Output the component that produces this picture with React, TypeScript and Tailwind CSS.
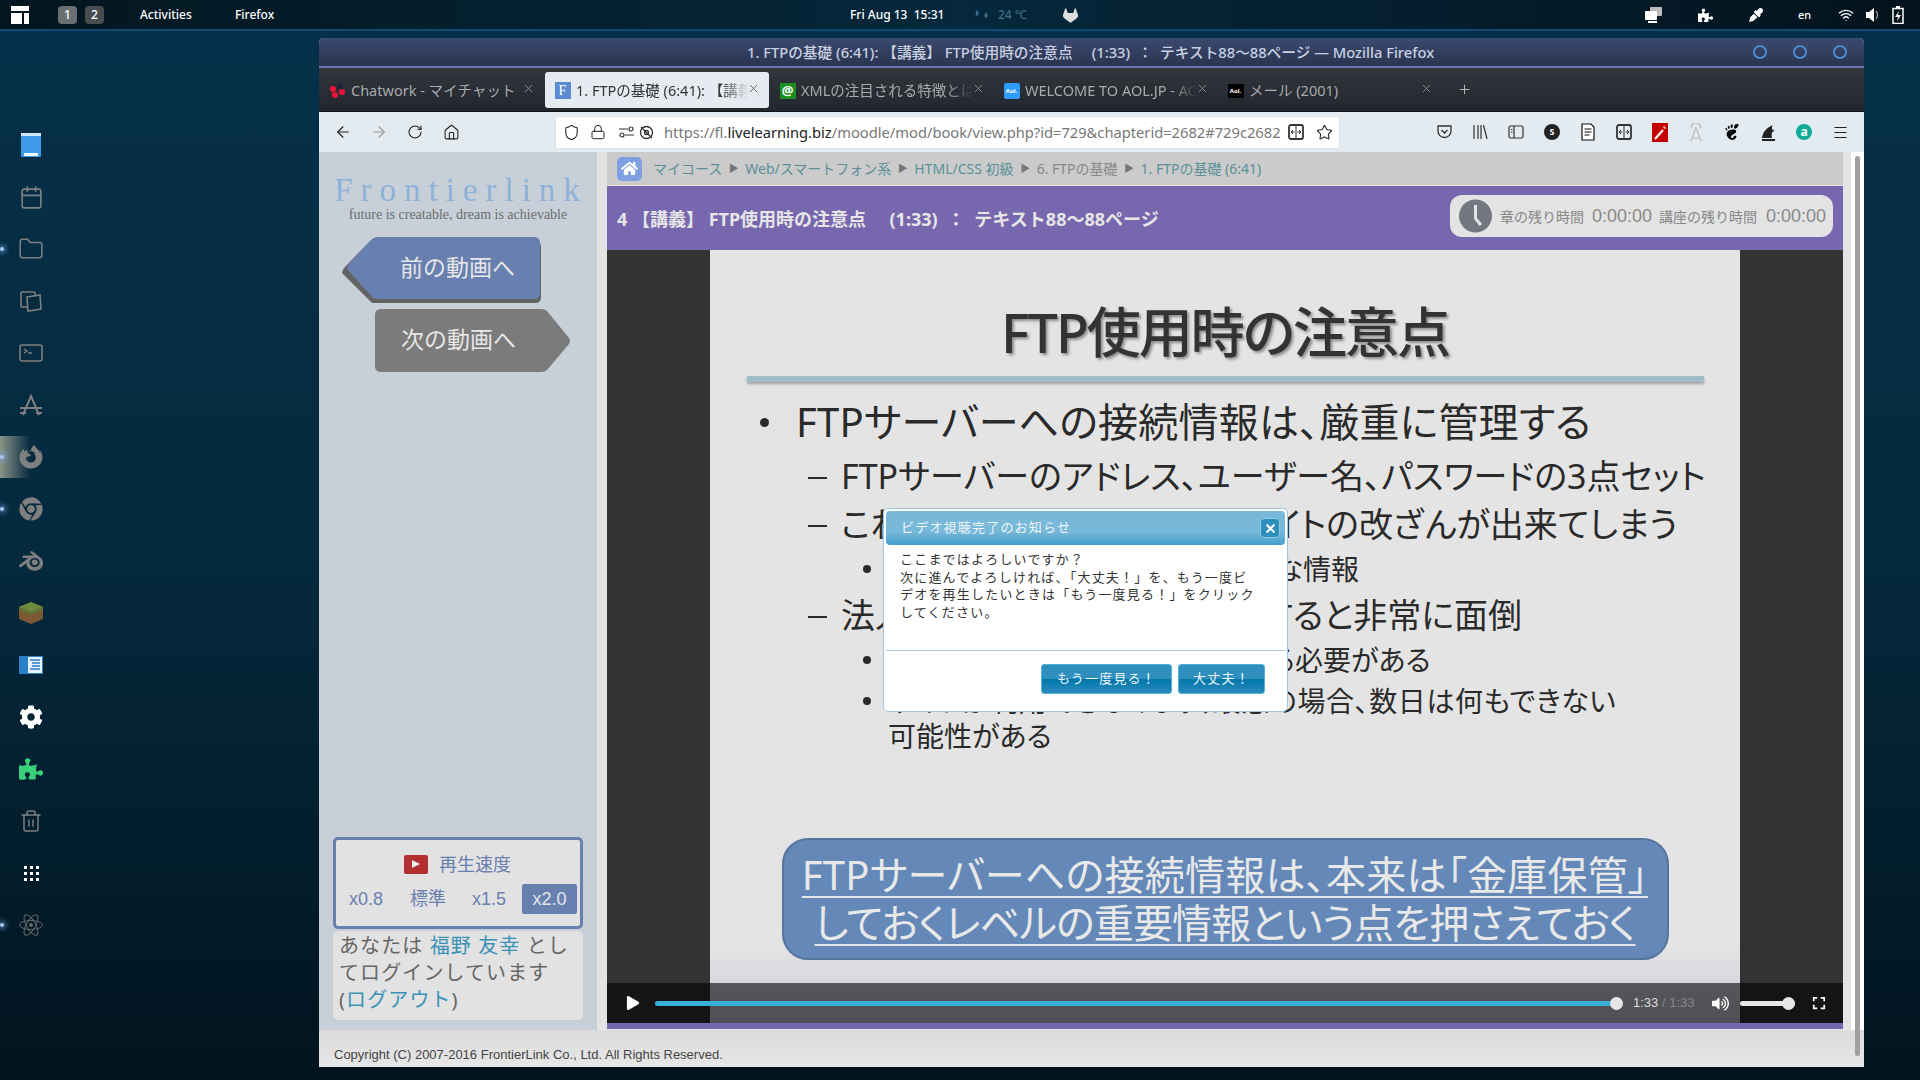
import { ArrowLeft, ArrowRight, Calendar, Folder, Home, Lock, Menu, Plus, RotateCw, Shield, Star, Trash2, Wifi, X } from "lucide-react";
import { FaChrome, FaCog, FaExpand, FaFirefoxBrowser, FaHome, FaPlay, FaPuzzlePiece, FaVolumeUp, FaEyeDropper } from "react-icons/fa";
import { SiBlender, SiGitlab, SiGnome } from "react-icons/si";

const cjk = "[font-family:'Noto_Sans','Noto_Sans_CJK_JP',sans-serif]";

function Dock() {
  const grey = "text-[#7f7f7f]";
  return (
    <div className="w-[319px] shrink-0 pt-[88px] flex flex-col">
      <DockItem>
        <svg width="20" height="24" viewBox="0 0 20 24">
          <rect width="20" height="24" rx="1" fill="#3f9be8" />
          <rect width="20" height="3" fill="#cfe6f7" />
          <rect x="3" y="20" width="14" height="3" fill="#f2f8fc" />
        </svg>
      </DockItem>
      <DockItem><Calendar size={25} strokeWidth={1.6} className={grey} /></DockItem>
      <DockItem dot><Folder size={26} strokeWidth={1.4} className={grey} /></DockItem>
      <DockItem>
        <svg width="24" height="24" viewBox="0 0 24 24" fill="none" stroke="#7f7f7f" strokeWidth="1.6">
          <rect x="2" y="3" width="14" height="15" rx="1" />
          <path d="M8 8l13-2 1 14-13 2z" fill="#05293d" />
        </svg>
      </DockItem>
      <DockItem>
        <svg width="24" height="18" viewBox="0 0 24 18" fill="none" stroke="#7f7f7f" strokeWidth="1.5">
          <rect x="1" y="1" width="22" height="16" rx="2" />
          <path d="M5 5l3 2-3 2M9 9h4" />
        </svg>
      </DockItem>
      <DockItem>
        <svg width="24" height="22" viewBox="0 0 24 22" fill="none" stroke="#7f7f7f" strokeWidth="2">
          <path d="M4 21L12 2l8 19M1 14h22M1 19h6M17 19h6" />
        </svg>
      </DockItem>
      <DockItem active dot><FaFirefoxBrowser size={24} className={grey} /></DockItem>
      <DockItem dot><FaChrome size={24} className={grey} /></DockItem>
      <DockItem><SiBlender size={24} className={grey} /></DockItem>
      <DockItem>
        <svg width="24" height="22" viewBox="0 0 24 22">
          <path d="M12 0l12 5v12l-12 5-12-5V5z" fill="#7c5836" />
          <path d="M12 0l12 5-12 5L0 5z" fill="#6b8a3c" />
          <path d="M0 5l12 5 12-5v3l-12 5L0 8z" fill="#5d7434" />
        </svg>
      </DockItem>
      <DockItem>
        <svg width="24" height="18" viewBox="0 0 24 18">
          <rect width="24" height="18" fill="#2a80c8" />
          <rect x="9" y="1" width="14" height="16" fill="#e8f2fa" />
          <path d="M11 4h10M13 7h8M13 10h8M11 13h10" stroke="#2a80c8" strokeWidth="1.4" />
        </svg>
      </DockItem>
      <DockItem><FaCog size={24} className="text-white" /></DockItem>
      <DockItem><FaPuzzlePiece size={24} className="text-[#3ad07a]" /></DockItem>
      <DockItem><Trash2 size={24} strokeWidth={1.5} className={grey} /></DockItem>
      <DockItem>
        <div className="grid grid-cols-3 gap-[3px]">
          {Array.from({ length: 9 }).map((_, i) => (
            <div key={i} className="w-[3px] h-[3px] bg-white" />
          ))}
        </div>
      </DockItem>
      <DockItem dot>
        <svg width="24" height="24" viewBox="0 0 24 24" fill="none" stroke="#666" strokeWidth="1">
          <ellipse cx="12" cy="12" rx="11.500" ry="4.500" />
          <ellipse cx="12" cy="12" rx="11.500" ry="4.500" transform="rotate(60 12 12)" />
          <ellipse cx="12" cy="12" rx="11.500" ry="4.500" transform="rotate(120 12 12)" />
          <circle cx="12" cy="12" r="1.500" fill="#666" />
        </svg>
      </DockItem>
    </div>
  );
}

function DockItem({ children, dot, active }: { children: React.ReactNode; dot?: boolean; active?: boolean }) {
  return (
    <div className="relative h-[52px] w-[62px] flex items-center justify-center">
      {active && <div className="absolute left-0 top-[5px] h-[42px] w-[30px] bg-gradient-to-r from-[#8b9488] to-transparent" />}
      {dot && <div className="absolute left-0 top-[24px] h-[4px] w-[4px] rounded-full bg-[#a8c8f0] shadow-[0_0_5px_2px_rgba(120,170,240,0.6)]" />}
      <div className="relative">{children}</div>
    </div>
  );
}

function TopBar() {
  return (
    <div className="h-[31px] shrink-0 pt-[1px] flex items-center border-b-2 border-[#0e4a72] bg-gradient-to-r from-[#03161f] via-[#05283c] to-[#03131d] text-white text-[12px] font-medium [font-family:'Noto_Sans',sans-serif]">
      <svg className="ml-[11px]" width="18" height="18" viewBox="0 0 18 18" fill="#fff">
        <rect width="18" height="5" />
        <rect y="7" width="11" height="11" />
        <rect x="13" y="7" width="5" height="11" />
      </svg>
      <div className="ml-[29px] w-[19px] h-[18px] rounded-[4px] bg-[#6b6f72] flex items-center justify-center">1</div>
      <div className="ml-[8px] w-[19px] h-[18px] rounded-[4px] bg-[#4a4d50] flex items-center justify-center">2</div>
      <div className="ml-[36px] w-[95px]">Activities</div>
      <div className="w-[615px]">Firefox</div>
      <div className="w-[124px] whitespace-pre">Fri Aug 13  15:31</div>
      <svg width="16" height="12" viewBox="0 0 16 12" fill="#3f6f8f"><path d="M3 1c2 3 2 5 0 6-2-1-2-3 0-6zM12 3c2 3 2 5 0 6-2-1-2-3 0-6z" /></svg>
      <div className="ml-[8px] w-[65px] text-[#3f6a88]">24 ℃</div>
      <SiGitlab size={15} className="text-[#ddd]" />
      <div className="ml-auto mr-[16px] flex items-center">
        <svg width="17" height="16" viewBox="0 0 17 16" fill="#fff"><rect x="5" width="12" height="9" rx="1" fill="#bbb" /><rect y="4" width="12" height="9" rx="1" /><rect x="3" y="14" width="9" height="2" /></svg>
        <FaPuzzlePiece size={15} className="ml-[36px]" />
        <FaEyeDropper size={14} className="ml-[36px]" />
        <span className="ml-[29px] w-[25px] text-center text-[11px]">en</span>
        <Wifi size={16} className="ml-[21px]" />
        <svg className="ml-[12px]" width="15" height="14" viewBox="0 0 15 14" fill="#fff"><path d="M0 4h3l5-4v14l-5-4H0z" /><path d="M10 3c2 2 2 6 0 8" fill="none" stroke="#aaa" strokeWidth="1.2" /></svg>
        <svg className="ml-[11px]" width="12" height="18" viewBox="0 0 12 18" fill="none" stroke="#fff" strokeWidth="1.5"><rect x="1" y="2.5" width="10" height="15" /><rect x="4" y="0" width="4" height="2" fill="#fff" stroke="none" /><path d="M7 5L3 11h3l-1 4 4-6H6z" fill="#fff" stroke="none" /></svg>
      </div>
    </div>
  );
}

function Tab({ icon, label, active, fade }: { icon: React.ReactNode; label: string; active?: boolean; fade?: boolean }) {
  return (
    <div className={"relative w-[224px] h-[36px] shrink-0 flex items-center pl-[9px] pt-[2px] rounded-[3px] text-[14.5px] " + (active ? "bg-[#e5ebf1] text-[#333]" : "text-[#a8aaad]")}>
      <div className="w-[17px] h-[17px] shrink-0 mr-[5px] flex items-center justify-center">{icon}</div>
      <div className={"w-[172px] whitespace-nowrap overflow-hidden " + (fade ? "[mask-image:linear-gradient(to_right,black_85%,transparent)]" : "")}>{label}</div>
      <X size={13} strokeWidth={1.4} className={"absolute right-[9px] top-[10px] " + (active ? "text-[#444]" : "text-[#a8aaad]")} />
    </div>
  );
}

function ToolIcon({ children }: { children: React.ReactNode }) {
  return <div className="w-[36px] flex items-center justify-center">{children}</div>;
}

function ReaderIcon() {
  return (
    <svg width="16" height="16" viewBox="0 0 16 16" fill="none" stroke="#333" strokeWidth="1.8">
      <rect x="1" y="1" width="14" height="14" rx="2" />
      <path d="M8 2v12" strokeWidth="1" />
      <path d="M3 8h3.500M5 6L3 8l2 2M13 8H9.500M11 6l2 2-2 2" strokeWidth="1" />
    </svg>
  );
}

function Toolbar() {
  return (
    <div className="h-[40px] shrink-0 bg-[#e3ebf0] flex items-center text-[#222]">
      <div className="w-[236px] pl-[6px] flex items-center">
        <ToolIcon><ArrowLeft size={18} strokeWidth={1.5} /></ToolIcon>
        <ToolIcon><ArrowRight size={18} strokeWidth={1.5} className="text-[#999]" /></ToolIcon>
        <ToolIcon><RotateCw size={16} strokeWidth={1.6} /></ToolIcon>
        <ToolIcon><Home size={17} strokeWidth={1.5} /></ToolIcon>
      </div>
      <div className="w-[785px] h-[33px] bg-white rounded-[3px] border border-[#dde3e8] flex items-center pl-[6px]">
        <div className="w-[18px] flex justify-center"><Shield size={17} strokeWidth={1.5} /></div>
        <div className="w-[28px] ml-[4px] flex justify-center"><Lock size={16} strokeWidth={1.5} /></div>
        <svg className="ml-[7px]" width="15" height="12" viewBox="0 0 15 12" fill="none" stroke="#333" strokeWidth="1.2"><circle cx="3" cy="9" r="2" /><circle cx="12" cy="3" r="2" /><path d="M0 3h9M6 9h9" /></svg>
        <svg className="ml-[5px]" width="15" height="15" viewBox="0 0 15 15" fill="none" stroke="#333" strokeWidth="1.3"><circle cx="7.5" cy="7.5" r="6" /><path d="M2 2l11 11" /><circle cx="7.5" cy="7.5" r="2" /></svg>
        <div className="ml-[10px] w-[622px] whitespace-nowrap overflow-hidden text-[14.7px] text-[#777]">
          https://fl.<span className="text-[#222]">livelearning.biz</span>/moodle/mod/book/view.php?id=729&amp;chapterid=2682#729c2682
        </div>
        <div className="ml-[2px]"><ReaderIcon /></div>
        <Star size={17} strokeWidth={1.5} className="ml-[12px]" />
      </div>
      <div className="ml-[86px] flex items-center">
        <ToolIcon><svg width="15" height="14" viewBox="0 0 15 14" fill="none" stroke="#333" strokeWidth="1.3"><path d="M1 1h13v5a6.500 6.500 0 0 1-13 0z" /><path d="M4.500 5l3 3 3-3" /></svg></ToolIcon>
        <ToolIcon><svg width="15" height="16" viewBox="0 0 15 16" fill="none" stroke="#333" strokeWidth="1.2"><path d="M1 1v14M5 1v14M8 1v14M10.500 1L14 15" /></svg></ToolIcon>
        <ToolIcon><svg width="16" height="14" viewBox="0 0 16 14" fill="none" stroke="#333" strokeWidth="1.2"><rect x="1" y="1" width="14" height="12" rx="1.500" /><path d="M6 1v12M3 4.500h1.500M3 7h1.500" /></svg></ToolIcon>
        <ToolIcon><div className="w-[16px] h-[16px] rounded-full bg-[#222] text-white text-[9px] font-bold flex items-center justify-center">S</div></ToolIcon>
        <ToolIcon><svg width="14" height="18" viewBox="0 0 14 18" fill="#fff" stroke="#111" strokeWidth="1.2"><path d="M1 1h9l3 3v13H1z" /><path d="M3.500 6h7M3.500 9h7M3.500 12h5" /></svg></ToolIcon>
        <ToolIcon><ReaderIcon /></ToolIcon>
        <ToolIcon><svg width="16" height="19" viewBox="0 0 16 19"><rect width="16" height="19" fill="#c40000" /><path d="M3 16L11 7" stroke="#fff" strokeWidth="2" /><path d="M12 3v2M14 5h-2" stroke="#fff" /></svg></ToolIcon>
        <ToolIcon><svg width="14" height="18" viewBox="0 0 14 18" fill="none" stroke="#bbb" strokeWidth="1.2"><path d="M2 5a5 5 0 0 1 10 0M7 5L3 15h8zM1 17h3M10 17h3" /></svg></ToolIcon>
        <ToolIcon><SiGnome size={16} className="text-black" /></ToolIcon>
        <ToolIcon><svg width="15" height="17" viewBox="0 0 15 17" fill="#222"><path d="M1 14c1-6 4-10 11-13-2 3-1 5 2 6-3 0-4 2-3 7z" /><rect x="1" y="15" width="13" height="2" /></svg></ToolIcon>
        <ToolIcon><div className="w-[16px] h-[16px] rounded-full bg-[#0cae9a] text-white text-[12px] font-bold flex items-center justify-center leading-none">a</div></ToolIcon>
        <ToolIcon><Menu size={17} strokeWidth={1.5} /></ToolIcon>
      </div>
    </div>
  );
}

function Sidebar() {
  return (
    <div className="w-[278px] shrink-0 bg-[#c7d0d8] flex flex-col">
      <div className="h-[85px] flex flex-col items-center pt-[20px] [font-family:'Liberation_Serif',serif]">
        <div className="text-[33px] leading-[36px] tracking-[8px] text-[#8fb2d8] pl-[6px] whitespace-nowrap">Frontierlink</div>
        <div className="text-[14px] leading-[16px] text-[#6d6d6d] whitespace-nowrap mt-[-1px]">future is creatable, dream is achievable</div>
      </div>
      <div className="relative h-[66px] ml-[23px] w-[200px] flex items-center pl-[58px] text-[23px] text-[#e6e6e6] mb-[6px]">
        <svg className="absolute left-0 top-0" width="200" height="66" viewBox="0 0 200 66">
          <path d="M0 36q0-3 3-6L28 4h165q6 0 6 6v50q0 6-6 6H30z" fill="#636363" />
          <path d="M6 28q-2 3 0 5L30 60q2 2 6 2h156q6 0 6-6V6q0-6-6-6H36q-4 0-6 2z" fill="#6880b0" />
        </svg>
        <span className="relative top-[-3px]">前の動画へ</span>
      </div>
      <div className="relative h-[63px] ml-[56px] w-[196px] flex items-center pl-[26px] text-[23px] text-[#e6e6e6]">
        <svg className="absolute left-0 top-0" width="196" height="63" viewBox="0 0 196 63">
          <path d="M0 6q0-6 6-6h160q4 0 6 2l22 27q2 3 0 6l-22 26q-2 2-6 2H6q-6 0-6-6z" fill="#7b7b7b" />
        </svg>
        <span className="relative top-[-1px]">次の動画へ</span>
      </div>

      <div className="mt-auto ml-[14px] mr-[14px] mb-[10px] flex flex-col gap-[2px]">
        <div className="h-[92px] border-[3px] border-[#6880b0] rounded-[5px] bg-[#e2e2e2] flex flex-col text-[#6880b0]">
          <div className="h-[44px] pt-[4px] flex items-center justify-center gap-[11px] text-[18px] pr-[1px]">
            <div className="w-[24px] h-[19px] rounded-[2px] bg-[#b43030] flex items-center justify-center">
              <svg width="8" height="8" viewBox="0 0 8 8" fill="#eee"><path d="M0 0l8 4-8 4z" /></svg>
            </div>
            再生速度
          </div>
          <div className="flex items-center text-[18px] [font-family:'Liberation_Sans','Noto_Sans_CJK_JP',sans-serif]">
            <div className="w-[74px] pl-[13px]">x0.8</div>
            <div className="w-[62px]">標準</div>
            <div className="w-[50px]">x1.5</div>
            <div className="w-[55px] h-[30px] rounded-[2px] bg-[#6880b0] text-[#e6e6e6] flex items-center justify-center">x2.0</div>
          </div>
        </div>
        <div className="h-[89px] rounded-[5px] bg-[#e2e2e2] px-[6px] text-[20px] leading-[27px] tracking-[1.100px] text-[#666] pt-[1px] whitespace-nowrap">
          あなたは <span className="text-[#3a92b8]">福野 友幸</span> とし<br />てログインしています<br />(<span className="text-[#3a92b8]">ログアウト</span>)
        </div>
      </div>
    </div>
  );
}

function Crumbs() {
  const sep = <span className="text-[#777] text-[10px] mx-[6.500px]">▶</span>;
  return (
    <div className="h-[34px] shrink-0 flex items-center bg-[#cbcbcb] border-b border-[#e6e6e6] text-[14px] text-[#5a9098]">
      <div className="ml-[10px] mr-[11px] w-[25px] h-[24px] rounded-[5px] bg-[#7ea0e0] flex items-center justify-center"><FaHome size={17} className="text-white" /></div>
      マイコース{sep}Web/スマートフォン系{sep}HTML/CSS 初級{sep}<span className="text-[#888]">6. FTPの基礎</span>{sep}1. FTPの基礎 (6:41)
    </div>
  );
}

function Banner() {
  return (
    <div className="h-[64px] shrink-0 bg-[#7667ae] flex items-center pl-[10px] pr-[10px] text-[18px] font-bold text-[#e6e6e6] whitespace-pre">
      <div className="pt-[2px]">4 【講義】 FTP使用時の注意点     (1:33)  ：  テキスト88～88ページ</div>
      <div className="ml-auto w-[383px] h-[42px] rounded-[12px] bg-[#e3e3e3] flex items-center pl-[9px] text-[#888] font-normal mb-[4px]">
        <svg width="33" height="34" viewBox="0 0 33 34"><circle cx="16.500" cy="17" r="16.500" fill="#737880" /><path d="M15 6h3v13l5 6-2.500 2L15 20z" fill="#e3e3e3" /></svg>
        <span className="ml-[8px] text-[14px]">章の残り時間</span>
        <span className="ml-[8px] text-[18px] [font-family:'Liberation_Sans',sans-serif]">0:00:00</span>
        <span className="ml-[7px] text-[14px]">講座の残り時間</span>
        <span className="ml-[9px] text-[18px] [font-family:'Liberation_Sans',sans-serif]">0:00:00</span>
      </div>
    </div>
  );
}

function Slide() {
  const sub = "h-[44px] pl-[131px] relative flex items-center text-[34px] whitespace-nowrap";
  const subsub = "h-[40px] pl-[178px] relative flex items-center text-[28px] whitespace-nowrap";
  const dash = <span className="absolute left-[98px] top-[23px] w-[19px] h-[2px] bg-[#2a2a2a]" />;
  const dot = <span className="absolute left-[153px] top-[16px] w-[8px] h-[8px] rounded-full bg-[#2a2a2a]" />;
  return (
    <div className="w-[1030px] h-[773px] mx-auto flex flex-col bg-[linear-gradient(to_bottom,#e4e4e4_90%,#c8c8d8)] text-[#2a2a2a] [font-feature-settings:'palt']">
      <div className="mt-[47px] h-[70px] flex items-center justify-center text-[54px] tracking-[-2px] font-medium text-[#333] [text-shadow:2px_2px_3px_rgba(0,0,0,0.4)]">FTP使用時の注意点</div>
      <div className="mt-[9px] ml-[37px] w-[957px] h-[6px] bg-[#9fbcc8] shadow-[0_2px_3px_rgba(0,0,0,0.3)]" />
      <div className="mt-[16px] h-[48px] pl-[86px] relative flex items-center text-[40px] tracking-[0.200px] whitespace-nowrap">
        <span className="absolute left-[50px] top-[20px] w-[9px] h-[9px] rounded-full bg-[#2a2a2a]" />
        FTPサーバーへの接続情報は、厳重に管理する
      </div>
      <div className={sub + " mt-[8px]"}>{dash}FTPサーバーのアドレス、ユーザー名、パスワードの3点セット</div>
      <div className={sub + " mt-[4px]"}>{dash}これが他人に漏れるとWebサイトの改ざんが出来てしまう</div>
      <div className={subsub + " mt-[3px]"}>{dot}顧客の個人情報など非常に重要な情報</div>
      <div className={sub + " mt-[4px]"}>{dash}法人サイトなどで問題が発生すると非常に面倒</div>
      <div className={subsub + " mt-[3px]"}>{dot}関係各所に連絡や謝罪などをする必要がある</div>
      <div className={subsub + " mt-[1px] tracking-[0.600px]"}>{dot}サイトが利用できなくなり、最悪の場合、数日は何もできない</div>
      <div className="h-[36px] mt-[-3px] pl-[178px] flex items-center text-[28px] whitespace-nowrap">可能性がある</div>
      <div className="mt-[84px] mx-auto w-[887px] h-[122px] rounded-[26px] bg-[#6488b8] border-2 border-[#56759c] flex flex-col items-center text-[40px] leading-[48px] text-[#e8e8e8] underline decoration-2 underline-offset-[6px] pt-[11px]">
        <div className="tracking-[0.250px]">FTPサーバーへの接続情報は、本来は「金庫保管」</div>
        <div className="tracking-[-0.850px]">しておくレベルの重要情報という点を押さえておく</div>
      </div>
    </div>
  );
}

function Controls() {
  return (
    <div className="absolute left-0 right-0 bottom-0 h-[40px] bg-black/60 flex items-center text-[#ddd]">
      <FaPlay size={14} className="ml-[19px] text-white" />
      <div className="relative ml-[15px] w-[968px] h-[5px] rounded-full bg-[#36b0d8]">
        <div className="absolute right-0 top-[-4px] w-[13px] h-[13px] rounded-full bg-[#e6e6e6]" />
      </div>
      <div className="ml-[10px] w-[79px] text-[13px] [font-family:'Liberation_Sans',sans-serif] whitespace-nowrap">1:33<span className="text-[#888]"> / 1:33</span></div>
      <FaVolumeUp size={17} className="text-white" />
      <div className="relative ml-[11px] w-[55px] h-[5px] rounded-full bg-[#e6e6e6]">
        <div className="absolute right-0 top-[-4px] w-[13px] h-[13px] rounded-full bg-[#e6e6e6]" />
      </div>
      <FaExpand size={14} className="ml-[17px] text-white" />
    </div>
  );
}

function Modal() {
  return (
    <div className="absolute left-[276px] top-[258px] w-[405px] h-[204px] rounded-[5px] border border-[#9cc6e4] bg-white p-[2px] text-[#333]">
      <div className="relative h-[34px] rounded-[4px] bg-[linear-gradient(to_bottom,#78b8d8_60%,#42a0cc)] flex items-center pl-[15px] text-[13px] tracking-[1.200px] text-[#eef6fa]">
        ビデオ視聴完了のお知らせ
        <div className="absolute right-[5px] top-[7px] w-[20px] h-[20px] rounded-[4px] border border-[#8fcbe6] bg-[#2f8fbc] flex items-center justify-center">
          <X size={13} strokeWidth={4} className="text-white" />
        </div>
      </div>
      <div className="h-[106px] border-b border-[#a5c8dc] pl-[14px] pt-[6px] text-[13px] leading-[17.700px] tracking-[1.200px] whitespace-nowrap">
        ここまではよろしいですか？<br />
        次に進んでよろしければ、「大丈夫！」を、もう一度ビ<br />
        デオを再生したいときは「もう一度見る！」をクリック<br />
        してください。
      </div>
      <div className="flex justify-end gap-[6px] pr-[20px] pt-[13px] text-[13px] tracking-[1.200px] text-[#eef6fa]">
        <div className="w-[131px] h-[30px] rounded-[3px] border border-[#55b0d8] bg-[linear-gradient(to_bottom,#2f8fbe_50%,#0076a8_50%,#2a8cbc)] flex items-center justify-center">もう一度見る！</div>
        <div className="w-[87px] h-[30px] rounded-[3px] border border-[#55b0d8] bg-[linear-gradient(to_bottom,#2f8fbe_50%,#0076a8_50%,#2a8cbc)] flex items-center justify-center">大丈夫！</div>
      </div>
    </div>
  );
}

export default function App() {
  return (
    <div className={"w-[1920px] h-[1080px] overflow-hidden flex flex-col bg-[linear-gradient(to_bottom,#06304a,#052a3e_50%,#021b28_85%,#02141e)] " + cjk}>
      <TopBar />
      <div className="flex flex-1 min-h-0">
        <Dock />
        <div className="w-[1545px] h-[1029px] mt-[7px] rounded-t-[5px] overflow-hidden flex flex-col bg-[#e3e3e3]">
          <div className="h-[30px] shrink-0 flex items-center bg-gradient-to-b from-[#3b4a70] to-[#2a3450] border-b-2 border-[#6a79b5] text-[14.7px] font-medium text-[#c8d0e0] whitespace-pre">
            <div className="ml-[428px]">1. FTPの基礎 (6:41): 【講義】 FTP使用時の注意点     (1:33)  ：  テキスト88～88ページ — Mozilla Firefox</div>
            <div className="ml-auto mr-[17px] flex gap-[26px]">
              <div className="w-[14px] h-[14px] rounded-full border-2 border-[#4a8ad0]" />
              <div className="w-[14px] h-[14px] rounded-full border-2 border-[#4a8ad0]" />
              <div className="w-[14px] h-[14px] rounded-full border-2 border-[#4a8ad0]" />
            </div>
          </div>
          <div className="h-[44px] shrink-0 pl-[1px] flex items-center bg-gradient-to-b from-[#33363c] to-[#22262e] border-b border-[#111]">
            <Tab
              label="Chatwork - マイチャット"
              icon={
                <svg width="16" height="16" viewBox="0 0 16 16">
                  <circle cx="10" cy="3" r="3" fill="#1b2340" />
                  <circle cx="3" cy="6" r="3" fill="#f0123c" />
                  <circle cx="12" cy="9" r="3" fill="#f0123c" />
                  <circle cx="5" cy="12" r="3" fill="#f0123c" />
                </svg>
              }
            />
            <div className="mx-[1px]">
              <Tab active fade label="1. FTPの基礎 (6:41): 【講義】 FTP使用時の注意点" icon={<div className="w-[16px] h-[17px] bg-[#5a8ad0] text-white text-[14px] leading-[17px] text-center [font-family:'Liberation_Serif',serif]">F</div>} />
            </div>
            <Tab fade label="XMLの注目される特徴とは" icon={<div className="w-[16px] h-[16px] bg-[#1a9020] text-white text-[13px] leading-[15px] text-center font-bold">@</div>} />
            <Tab fade label="WELCOME TO AOL.JP - AOL" icon={<div className="w-[16px] h-[16px] rounded-[2px] bg-[#2e9cff] text-white text-[6px] leading-[16px] text-center font-bold">Aol.</div>} />
            <Tab label="メール (2001)" icon={<div className="w-[16px] h-[14px] bg-black text-white text-[6px] leading-[14px] text-center font-bold">Aol.</div>} />
            <Plus size={15} strokeWidth={1.4} className="ml-[15px] text-[#c8c8c8]" />
          </div>
          <Toolbar />
          <div className="flex flex-1 min-h-0 relative">
            <Sidebar />
            <div className="w-[10px] shrink-0" />
            <div className="flex-1 min-w-0 flex flex-col">
              <Crumbs />
              <Banner />
              <div className="relative h-[773px] bg-[#333]">
                <Slide />
                <Controls />
                <Modal />
              </div>
              <div className="h-[7px] bg-[#7667ae] border-b border-[#e6e6e6]" />
            </div>
            <div className="w-[21px] shrink-0 pl-[8px]">
              <div className="h-full bg-white pl-[4px] pt-[4px]">
                <div className="w-[5px] h-[900px] rounded-full bg-[#a0a0a0]" />
              </div>
            </div>
          </div>
          <div className="h-[37px] shrink-0 bg-gradient-to-b from-[#dcdcdc] to-[#e6e6e6] flex items-center pl-[15px] pt-[12px] text-[13px] text-[#444] [font-family:'Liberation_Sans',sans-serif]">
            Copyright (C) 2007-2016 FrontierLink Co., Ltd. All Rights Reserved.
          </div>
        </div>
      </div>
    </div>
  );
}
